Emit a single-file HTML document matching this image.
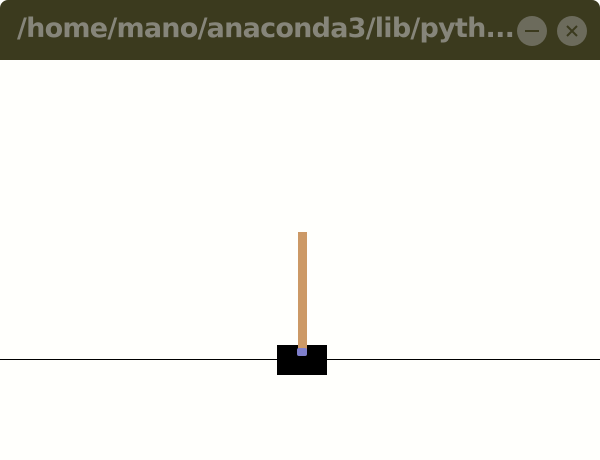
<!DOCTYPE html>
<html><head><style>
html,body{margin:0;padding:0;width:600px;height:460px;overflow:hidden;background:#fffffc;}
.bar{position:absolute;left:0;top:0;width:600px;height:60px;background:#3b3a1e;border-radius:8px 8px 0 0;}
.t{position:absolute;left:17px;top:13px;font:bold 27px "DejaVu Sans","Liberation Sans",sans-serif;color:#86857a;letter-spacing:-0.75px;white-space:nowrap;}
.b{position:absolute;top:16px;width:30px;height:30px;border-radius:50%;background:#6c6b5c;}
</style></head><body>
<div class="bar">
<div class="t">/home/mano/anaconda3/lib/pyth...</div>
<div class="b" style="left:517px"><div style="position:absolute;left:8px;top:14px;width:14px;height:2px;background:#3b3a1e"></div></div>
<div class="b" style="left:557px"><svg width="30" height="30" style="position:absolute;left:0;top:0"><path d="M10 10L20 20M20 10L10 20" stroke="#3b3a1e" stroke-width="2"/></svg></div>
</div>
<div style="position:absolute;left:0;top:359px;width:600px;height:1px;background:#000"></div>
<div style="position:absolute;left:277px;top:345px;width:50px;height:30px;background:#000"></div>
<div style="position:absolute;left:298px;top:232px;width:9px;height:122px;background:#cc9966"></div>
<div style="position:absolute;left:297px;top:348px;width:10px;height:8px;background:#7f7fcc;border-radius:2px"></div>
</body></html>
